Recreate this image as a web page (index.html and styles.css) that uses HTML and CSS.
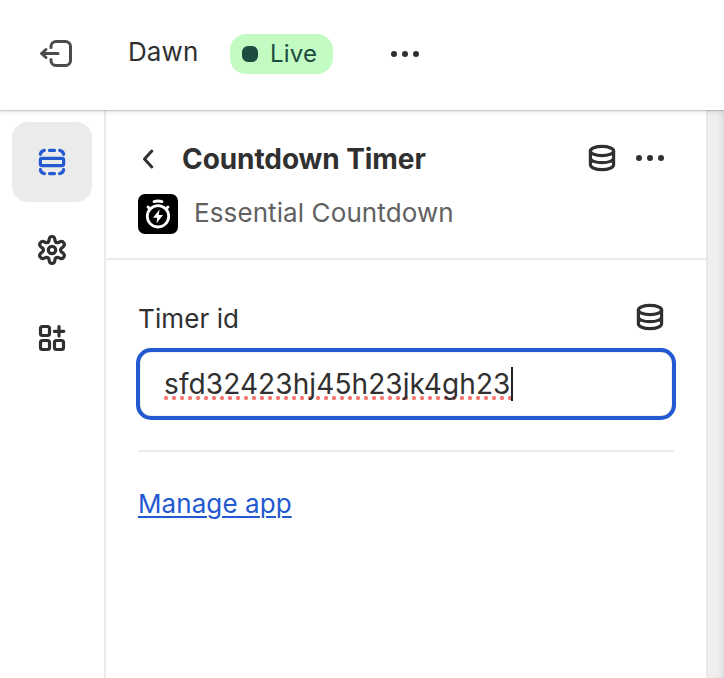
FILE: index.html
```html
<!DOCTYPE html>
<html lang="en">
<head>
<meta charset="utf-8">
<title>Dawn</title>
<link rel="stylesheet" href="styles.css">
</head>
<body>
<svg class="defs" aria-hidden="true">
  <symbol id="database" viewBox="0 0 40 40">
    <ellipse cx="20" cy="13" rx="11.600" ry="4.700"/>
    <path d="M8.400 13v13.700c0 2.700 5.200 4.900 11.600 4.900s11.600-2.200 11.600-4.900v-13.700M8.400 20c0 2.700 5.200 4.700 11.600 4.700s11.600-2 11.600-4.700"/>
  </symbol>
  <symbol id="dots" viewBox="0 0 40 40">
    <circle cx="9" cy="20" r="3"/><circle cx="20" cy="20" r="3"/><circle cx="31" cy="20" r="3"/>
  </symbol>
</svg>
<header class="topbar">
  <svg class="icon exit" viewBox="0 0 40 40"><path d="M15 14.500v-1a5 5 0 0 1 5-5h9.500a5 5 0 0 1 5 5v14a5 5 0 0 1-5 5h-9.500a5 5 0 0 1-5-5v-1M22 20.500H6M10 16.500l-4.500 4 4.500 4"/></svg>
  <span class="theme">Dawn</span>
  <span class="badge"><i class="dot"></i><span class="live">Live</span></span>
  <svg class="icon solid more"><use href="#dots"/></svg>
</header>
<div class="body">
  <nav class="rail">
    <a class="tab active"><svg class="icon" viewBox="0 0 40 40">
      <rect x="8.400" y="16.400" width="23.200" height="7.200" rx="1.500"/>
      <path d="M8.400 12.300c.3-2 1.700-3.500 3.900-3.900M17.500 8.400h5M27.700 8.400c2.200.4 3.600 1.900 3.900 3.900M8.400 27.700c.3 2 1.700 3.500 3.900 3.900M17.500 31.600h5M27.700 31.600c2.200-.4 3.600-1.900 3.900-3.900"/>
    </svg></a>
    <a class="tab"><svg class="icon" viewBox="0 0 40 40">
      <path d="M17.200 9.300Q17.500 6.500 20 6.500T22.800 9.300L23.100 11Q23.500 12.500 25 12.600Q25.800 12.800 26.800 12.300L28.300 11.600Q30.600 10.900 31.900 13.100T31 16.900L29.700 17.900Q28.500 18.800 28.500 20T29.700 22.100L31 23.100Q33.100 24.700 31.900 26.900T28.300 28.400L26.800 27.700Q25.800 27.200 25 27.400Q23.500 27.500 23.100 29L22.800 30.700Q22.500 33.500 20 33.500T17.200 30.700L16.900 29Q16.500 27.500 15 27.400Q14.200 27.200 13.200 27.700L11.700 28.400Q9.400 29.100 8.100 26.900T9 23.100L10.300 22.100Q11.500 21.200 11.500 20T10.300 17.900L9 16.900Q6.900 15.300 8.100 13.100T11.700 11.600L13.200 12.300Q14.200 12.800 15 12.600Q16.500 12.500 16.900 11Z"/><circle cx="20" cy="20" r="3.700"/>
    </svg></a>
    <a class="tab"><svg class="icon" viewBox="0 0 40 40">
      <rect x="8.500" y="8.500" width="9" height="9" rx="2"/><rect x="8.500" y="22.500" width="9" height="9" rx="2"/><rect x="22.500" y="22.500" width="9" height="9" rx="2"/><path d="M27 8.500v9.500M22.300 13.300h9.500"/>
    </svg></a>
  </nav>
  <main class="panel">
    <section class="heading">
      <div class="title-row">
        <svg class="back" viewBox="0 0 20 30"><path d="M13.800 7L6.500 15l7.300 8"/></svg>
        <h1>Countdown Timer</h1>
        <svg class="icon"><use href="#database"/></svg>
        <svg class="icon solid menu"><use href="#dots"/></svg>
      </div>
      <div class="app-row">
        <svg class="app-icon" viewBox="0 0 40 40">
          <rect width="40" height="40" rx="7"/>
          <circle cx="20" cy="22.300" r="10.700"/>
          <path d="M16 7.600q4-1.200 8 0M10 13l2 2M30 13l-2 2"/>
          <path class="bolt" d="M21.500 15.500L15 23.700h4.200l-.7 5.500 6.500-8.200h-4.200z"/>
        </svg>
        <span>Essential Countdown</span>
      </div>
    </section>
    <section class="settings">
      <div class="label-row"><label>Timer id</label><svg class="icon"><use href="#database"/></svg></div>
      <div class="field"><span class="value">sfd32423hj45h23jk4gh23</span><i class="caret"></i></div>
      <div class="link-row"><a class="link">Manage app</a></div>
    </section>
  </main>
  <aside class="preview"></aside>
</div>
</body>
</html>
```

FILE: styles.css
```css
* { box-sizing: border-box; }
body {
  margin: 0;
  height: 678px;
  overflow: hidden;
  display: flex;
  flex-direction: column;
  background: #fff;
  color: #303030;
  font: 26px/40px Inter, "Liberation Sans", sans-serif;
}
.defs { position: absolute; width: 0; height: 0; }
.icon {
  width: 40px;
  height: 40px;
  flex: none;
  fill: none;
  stroke: #303030;
  stroke-width: 3.200;
  stroke-linecap: round;
  stroke-linejoin: round;
}
.solid { fill: #303030; stroke: none; }
.topbar {
  position: relative;
  height: 110px;
  flex: none;
  display: flex;
  align-items: center;
  padding: 0 36px 2px;
  background: #fff;
  box-shadow: 0 1px 1px rgba(0, 0, 0, .14), 0 2px 5px rgba(0, 0, 0, .1);
}
.exit { stroke: #4a4a4a; stroke-width: 3; margin-top: -3px; }
.theme { width: 102px; margin: -4px 0 0 52px; letter-spacing: .1px; }
.badge {
  display: flex;
  align-items: center;
  width: 103px;
  height: 40px;
  padding-left: 12px;
  border-radius: 16px;
  background: #c2fcc3;
  color: #1d4b40;
  font-size: 24px;
}
.dot { width: 16px; height: 16px; border-radius: 6px; background: #1d4b40; }
.live { margin-left: 12px; letter-spacing: .2px; }
.more { margin-left: 52px; }
.body { flex: 1; display: flex; }
.rail {
  width: 106px;
  padding: 12px;
  border-right: 2px solid #ebebeb;
  display: flex;
  flex-direction: column;
  gap: 8px;
}
.tab {
  width: 80px;
  height: 80px;
  border-radius: 16px;
  display: flex;
  align-items: center;
  justify-content: center;
}
.active { background: #ebebeb; }
.active .icon { stroke: #2359d1; }
.panel { width: 602px; border-right: 2px solid #e7e7e7; }
.heading { height: 150px; padding: 28px 36px 0 32px; border-bottom: 2px solid #ebebeb; }
.title-row { display: flex; align-items: center; height: 40px; }
.back { width: 20px; height: 30px; margin-top: 2px; fill: none; stroke: #303030; stroke-width: 3; stroke-linecap: round; stroke-linejoin: round; }
h1 { flex: 1; margin: 2px 0 0 24px; font-size: 28px; font-weight: 650; line-height: 40px; letter-spacing: -.08px; }
.menu { margin-left: 8px; }
.app-row { display: flex; align-items: center; gap: 16px; margin-top: 16px; color: #616161; letter-spacing: .1px; }
.app-row span { margin-top: -2px; }
.app-icon { width: 40px; height: 40px; fill: #000; stroke-linecap: round; }
.app-icon circle, .app-icon path { fill: none; stroke: #fff; stroke-width: 2.800; }
.app-icon .bolt { fill: #fff; stroke: none; }
.settings { padding: 37px 30px 0; }
.label-row { display: flex; justify-content: space-between; align-items: center; height: 40px; padding: 0 6px 0 2px; }
.label-row label { margin-top: 4px; letter-spacing: .1px; }
.field {
  height: 72px;
  margin-top: 11px;
  padding-left: 24px;
  display: flex;
  align-items: center;
  border: 4px solid #2359d1;
  border-radius: 15px;
  box-shadow: inset 0 0 1px #777;
  font-size: 28px;
}
.value {
  height: 34px;
  line-height: 34px;
  letter-spacing: .1px;
  background: radial-gradient(circle at 2px 2px, #f37970 1.800px, transparent 2.400px) 0 100% / 8px 4px repeat-x;
  background-position: 0 29px;
  margin-bottom: 0;
}
.caret { width: 2px; height: 34px; background: #202020; }
.link-row { margin: 30px 2px 0; padding-top: 32px; border-top: 2px solid #ebebeb; }
.link { color: #2359d1; letter-spacing: .08px; text-decoration: underline; text-decoration-thickness: 2px; text-underline-offset: 3px; }
.preview { flex: 1; background: #efefef; box-shadow: inset -4px 0 6px -3px rgba(0, 0, 0, .12); }
```
